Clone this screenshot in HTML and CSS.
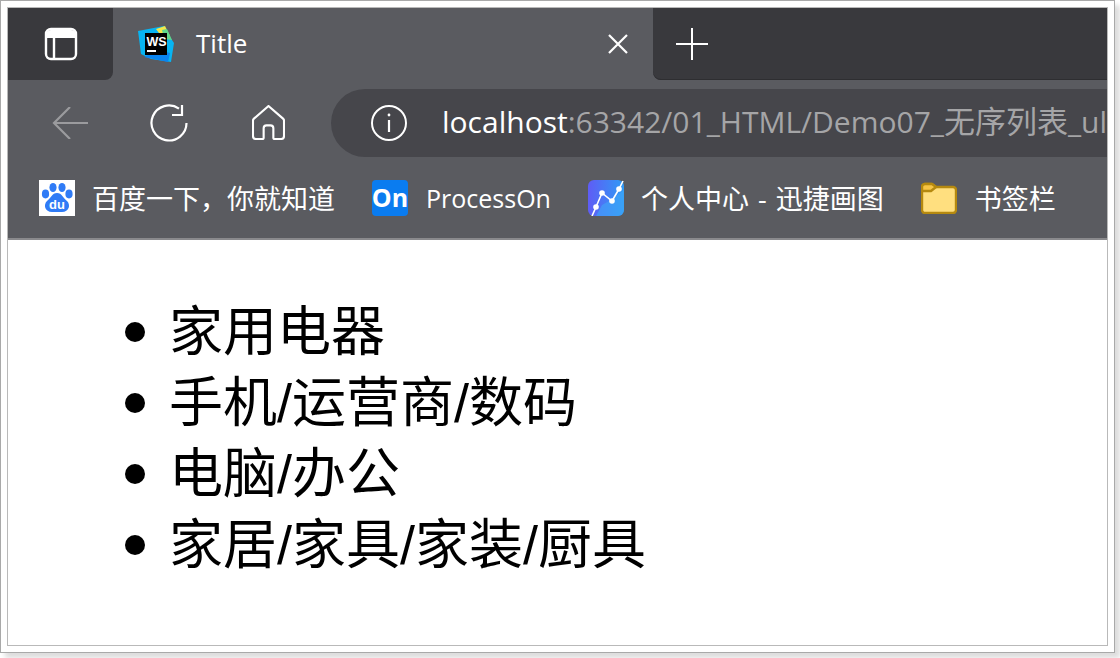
FILE: index.html
```html
<!DOCTYPE html>
<html>
  <head>
    <meta charset="utf-8">
    <title>Title</title>
    <link rel="stylesheet" href="styles.css">
  </head>
  <body>
    <div class="frame">
      <div class="window">
        <div class="tabstrip">
          <div class="strip-left">
            <svg width="34" height="34" viewBox="0 0 34 34" fill="none" stroke="#fff" stroke-width="2.4">
              <rect x="2" y="2" width="30" height="30" rx="5"></rect>
              <path d="M2 8a5 5 0 0 1 5-5h20a5 5 0 0 1 5 5v3H2z" fill="#fff" stroke="none"></path>
              <path d="M10 11v21"></path>
            </svg>
          </div>
          <div class="tab">
            <svg class="tab-icon" width="36" height="36" viewBox="0 0 36 36">
              <path d="M0 5 26 0l4 8 6 9-3 19-20-3-10-5z" fill="#07b4f2"></path>
              <path d="M18 3 27 0l5 10-8 1z" fill="#f2e74a"></path>
              <path d="M24 4 29 3l5 11-8-1z" fill="#5fd68c"></path>
              <path d="M6 31 30 36l2-9-12-3z" fill="#0a84f0"></path>
              <rect x="7" y="7" width="22" height="22" fill="#000"></rect>
              <text x="8.5" y="19.5" class="ws-text">WS</text>
              <rect x="9" y="24" width="9" height="2" fill="#fff"></rect>
            </svg>
            <span class="tab-title">Title</span>
            <svg class="tab-close" width="20" height="20" viewBox="0 0 20 20" stroke="#fff" stroke-width="2.2">
              <path d="M1 1l18 18M19 1 1 19"></path>
            </svg>
          </div>
          <div class="strip-right">
            <svg width="32" height="32" viewBox="0 0 32 32" stroke="#fff" stroke-width="2">
              <path d="M16 0v32M0 16h32"></path>
            </svg>
          </div>
        </div>

        <div class="toolbar">
          <svg class="nav-back" width="36" height="32" viewBox="0 0 36 32" fill="none" stroke="#9b9b9e" stroke-width="2.2">
            <path d="M36 16H2M18 0 2 16l16 16"></path>
          </svg>
          <svg class="nav-reload" width="38" height="38" viewBox="0 0 38 38" fill="none" stroke="#fff" stroke-width="2.2">
            <path d="M36.5 19A17.5 17.5 0 1 1 29 4.6"></path>
            <path d="M32 1v10H22"></path>
          </svg>
          <svg class="nav-home" width="33" height="35" viewBox="0 0 34 36" fill="none" stroke="#fff" stroke-width="2.2" stroke-linejoin="round">
            <path d="M17 1 2 14a3 3 0 0 0-1 2v16a3 3 0 0 0 3 3h7a1 1 0 0 0 1-1V24a3 3 0 0 1 3-3h4a3 3 0 0 1 3 3v10a1 1 0 0 0 1 1h7a3 3 0 0 0 3-3V16a3 3 0 0 0-1-2z"></path>
          </svg>
          <div class="address">
            <svg class="info" width="36" height="36" viewBox="0 0 36 36" fill="none" stroke="#fff" stroke-width="2">
              <circle cx="18" cy="18" r="17"></circle>
              <path d="M18 15v12" stroke-width="2.2"></path>
              <circle cx="18" cy="10" r="1.4" fill="#fff" stroke="none"></circle>
            </svg>
            <span class="url"><span class="url-host">localhost</span>:63342/01_HTML/Demo07_<span class="url-cjk">无序列表</span>_ul</span>
          </div>
        </div>

        <div class="bookmarks">
          <div class="bookmark">
            <svg width="36" height="36" viewBox="0 0 36 36">
              <rect width="36" height="36" fill="#fff"></rect>
              <g fill="#2f7bf6">
                <ellipse cx="6.5" cy="14" rx="3.6" ry="4.4"></ellipse>
                <ellipse cx="14" cy="7.5" rx="3.6" ry="4.6"></ellipse>
                <ellipse cx="23" cy="7.5" rx="3.6" ry="4.6"></ellipse>
                <ellipse cx="30" cy="14" rx="3.6" ry="4.4"></ellipse>
                <path d="M18 13c5 0 6 5 10 8 4 4 2 11-5 11H13c-7 0-9-7-5-11 4-3 5-8 10-8z"></path>
              </g>
              <text x="18" y="29" class="du-text">du</text>
            </svg>
            <span>百度一下，你就知道</span>
          </div>
          <div class="bookmark">
            <svg width="36" height="36" viewBox="0 0 36 36">
              <rect width="36" height="36" rx="4" fill="#0a7cf0"></rect>
              <text x="18" y="27" class="on-text">On</text>
            </svg>
            <span class="bookmark-latin">ProcessOn</span>
          </div>
          <div class="bookmark">
            <svg width="36" height="36" viewBox="0 0 36 36">
              <defs>
                <linearGradient id="chart" x1="0" y1="0" x2="1" y2="0">
                  <stop offset="0" stop-color="#5f5cf5"></stop>
                  <stop offset="1" stop-color="#2f9bf5"></stop>
                </linearGradient>
              </defs>
              <rect width="36" height="36" rx="6" fill="url(#chart)"></rect>
              <path d="M8 36 14 25 23 20 36 10V30a6 6 0 0 1-6 6z" fill="#3fa6f8" opacity=".6"></path>
              <path d="M4 36 8 27 14 13 24 21 31 9 35 1" fill="none" stroke="#fff" stroke-width="1.6"></path>
              <g fill="#fff">
                <circle cx="8" cy="27" r="2.8"></circle>
                <circle cx="14" cy="13" r="2.8"></circle>
                <circle cx="24" cy="21" r="2.8"></circle>
                <circle cx="31" cy="9" r="2.8"></circle>
              </g>
            </svg>
            <span class="bookmark-mixed">个人中心 - 迅捷画图</span>
          </div>
          <div class="bookmark bookmark-folder">
            <svg width="36" height="32" viewBox="0 0 36 32" stroke="#b5890f" stroke-width="2.4" stroke-linejoin="round">
              <path d="M1 5a3 3 0 0 1 3-3h7l4 3h17a3 3 0 0 1 3 3v20a3 3 0 0 1-3 3H4a3 3 0 0 1-3-3z" fill="#ffdf7f"></path>
              <path d="M1 5a3 3 0 0 1 3-3h7l4 3-5 4H1z" fill="#f6c445"></path>
            </svg>
            <span>书签栏</span>
          </div>
        </div>

        <div class="page">
          <ul class="list">
            <li>家用电器</li>
            <li>手机/运营商/数码</li>
            <li>电脑/办公</li>
            <li>家居/家具/家装/厨具</li>
          </ul>
        </div>
      </div>
    </div>
  </body>
</html>
```

FILE: styles.css
```css
html, body {
  margin: 0;
  padding: 0;
  height: 658px;
  background: #fff;
  overflow: hidden;
}

.frame {
  box-sizing: border-box;
  width: 1115px;
  height: 653px;
  padding: 6px;
  border: 1px solid #a9a9a9;
  background: #fff;
  box-shadow: 5px 5px 5px #ddd;
}

.window {
  box-sizing: border-box;
  height: 100%;
  display: flex;
  flex-direction: column;
  border: 1px solid #b9b9b9;
  overflow: hidden;
  font-family: "Open Sans", "Noto Sans CJK SC", sans-serif;
  color: #fff;
}

.tabstrip {
  height: 72px;
  flex: none;
  display: flex;
  background: #5a5b60;
}

.strip-left {
  width: 105px;
  display: flex;
  align-items: center;
  justify-content: center;
  background: #39393d;
  border-bottom-right-radius: 8px;
}

.strip-left svg {
  margin-left: 1px;
}

.tab {
  width: 540px;
  display: flex;
  align-items: center;
  padding: 0 25px;
  box-sizing: border-box;
  background: #5a5b60;
  border-radius: 8px 8px 0 0;
}

.tab-icon {
  margin-right: 22px;
}

.tab-title {
  flex: 1;
  font-size: 26px;
  margin-top: -3px;
}

.strip-right {
  flex: 1;
  display: flex;
  align-items: center;
  padding-left: 23px;
  background: #39393d;
  border-bottom-left-radius: 8px;
  box-shadow: inset 0 -1px 0 #2e2e31;
}

.ws-text {
  font-family: "Liberation Sans", sans-serif;
  font-size: 12.5px;
  font-weight: 700;
  fill: #fff;
}

.toolbar {
  height: 85px;
  flex: none;
  display: flex;
  align-items: center;
  padding-bottom: 2px;
  background: #5a5b60;
}

.nav-back {
  margin-left: 44px;
}

.nav-reload {
  margin-left: 62px;
}

.nav-home {
  margin-left: 64px;
}

.address {
  flex: 1;
  height: 68px;
  margin-left: 46px;
  display: flex;
  align-items: center;
  padding-left: 40px;
  background: #46464b;
  border-radius: 34px 0 0 34px;
  overflow: hidden;
  white-space: nowrap;
}

.info {
  flex: none;
  margin-right: 35px;
}

.url {
  font-size: 30px;
  line-height: 40px;
  margin-top: -2px;
  color: #a5a5a7;
}

.url-host {
  color: #fff;
}

.url-cjk {
  font-size: 31px;
}

.bookmarks {
  height: 61px;
  flex: none;
  display: flex;
  align-items: center;
  gap: 37px;
  padding: 0 0 10px 31px;
  background: #5a5b60;
  border-bottom: 2px solid #8a8a8d;
}

.bookmark {
  display: flex;
  align-items: center;
  gap: 17px;
  font-size: 27px;
  white-space: nowrap;
}

.bookmark-latin {
  font-size: 25px;
  margin-left: 1px;
}

.bookmark-mixed {
  word-spacing: 2px;
}

.bookmark-folder {
  gap: 18px;
}

.du-text {
  font-family: "Liberation Sans", sans-serif;
  font-size: 13px;
  font-weight: 700;
  text-anchor: middle;
  fill: #fff;
}

.on-text {
  font-family: "Open Sans", sans-serif;
  font-size: 25px;
  font-weight: 700;
  text-anchor: middle;
  fill: #fff;
}

.page {
  flex: 1;
  background: #fff;
  color: #000;
}

.list {
  margin: 0;
  padding: 57px 0 0 117px;
  list-style: none;
  font-family: "Liberation Sans", "Noto Sans CJK SC", sans-serif;
  font-size: 54px;
  line-height: 71px;
}

.list li {
  display: flex;
  align-items: center;
  gap: 24px;
}

.list li::before {
  content: "";
  flex: none;
  width: 20px;
  height: 20px;
  margin-bottom: 2px;
  border-radius: 50%;
  background: #000;
}
```
